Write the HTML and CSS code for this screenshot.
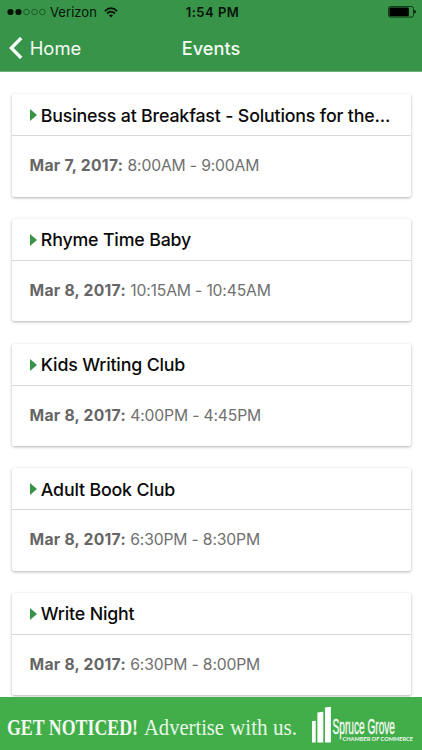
FILE: index.html
```html
<!DOCTYPE html>
<html lang="en">
<head>
  <meta charset="UTF-8">
  <title>Events</title>
  <meta name="viewport" content="width=device-width, initial-scale=1">
  <link rel="stylesheet" href="styles.css">
</head>
<body>

  <div class="app">
    <header class="header">
      <div class="status-bar">
        <div class="carrier">
          <svg class="signal" width="40" height="10" viewBox="0 0 40 10">
            <circle class="on" cx="4.5" cy="5" r="3.1"/>
            <circle class="on" cx="12.5" cy="5" r="3.1"/>
            <circle class="off" cx="20.5" cy="5" r="2.8"/>
            <circle class="off" cx="28.5" cy="5" r="2.8"/>
            <circle class="off" cx="36.3" cy="5" r="2.8"/>
          </svg>
          <span class="carrier-name">Verizon</span>
          <svg class="wifi" width="14" height="11" viewBox="0 0 14 11">
            <path d="M0.8 4.1 Q7 -1.7 13.2 4.1 M3 6.5 Q7 2.9 11 6.5"/>
            <path class="wifi-dot" d="M4.9 8.3 Q7 6.5 9.1 8.3 L7 10.4 Z"/>
          </svg>
        </div>
        <span class="time">1:54 PM</span>
        <svg class="battery" width="28" height="12" viewBox="0 0 28 12">
          <rect class="battery-case" x="0.5" y="0.5" width="25" height="10.6" rx="2"/>
          <rect x="1.4" y="1.4" width="19.4" height="8.8" rx="0.8"/>
          <path d="M26.3 4 Q27.8 4.3 27.8 5.8 Q27.8 7.3 26.3 7.6 Z"/>
        </svg>
      </div>
      <nav class="nav-bar">
        <a class="back">
          <svg width="14" height="22" viewBox="0 0 14 22">
            <path d="M12.2 1 L2.4 11 L12.2 21"/>
          </svg>
          <span>Home</span>
        </a>
        <h1 class="title">Events</h1>
      </nav>
    </header>

    <main class="events">
      <article class="card">
        <h2 class="card-header"><span class="arrow"></span>Business at Breakfast - Solutions for the...</h2>
        <p class="card-body"><b>Mar 7, 2017:</b> 8:00AM - 9:00AM</p>
      </article>
      <article class="card">
        <h2 class="card-header"><span class="arrow"></span>Rhyme Time Baby</h2>
        <p class="card-body"><b>Mar 8, 2017:</b> 10:15AM - 10:45AM</p>
      </article>
      <article class="card">
        <h2 class="card-header"><span class="arrow"></span>Kids Writing Club</h2>
        <p class="card-body"><b>Mar 8, 2017:</b> 4:00PM - 4:45PM</p>
      </article>
      <article class="card">
        <h2 class="card-header"><span class="arrow"></span>Adult Book Club</h2>
        <p class="card-body"><b>Mar 8, 2017:</b> 6:30PM - 8:30PM</p>
      </article>
      <article class="card">
        <h2 class="card-header"><span class="arrow"></span>Write Night</h2>
        <p class="card-body"><b>Mar 8, 2017:</b> 6:30PM - 8:00PM</p>
      </article>
    </main>

    <footer class="banner">
      <svg width="422" height="53" viewBox="0 0 422 53">
        <text class="slogan strong" x="7" y="38.3" textLength="131" lengthAdjust="spacingAndGlyphs">GET NOTICED!</text>
        <text class="slogan" x="144" y="38.3" textLength="80" lengthAdjust="spacingAndGlyphs">Advertise</text>
        <text class="slogan" x="230" y="38.3" textLength="67" lengthAdjust="spacingAndGlyphs">with us.</text>
        <path class="logo-bars" d="M312 24.3 L315.7 23.8 V45.5 H312 Z M317.4 15.5 L323.3 14.8 V45.5 H317.4 Z M325 10.5 L330.9 9.7 V45.5 H325 Z"/>
        <text class="logo-name" x="332.5" y="37.3" textLength="62.5" lengthAdjust="spacingAndGlyphs">Spruce Grove</text>
        <text class="logo-sub" x="342.5" y="43.6" textLength="70.5" lengthAdjust="spacingAndGlyphs">CHAMBER OF COMMERCE</text>
      </svg>
    </footer>
  </div>

</body>
</html>
```

FILE: styles.css
```css
/* General Styles */
* {
  box-sizing: border-box;
}

body {
  margin: 0;
  background-color: #fff;
  font-family: Inter, "Liberation Sans", sans-serif;
}

.app {
  display: flex;
  flex-direction: column;
  height: 750px;
  overflow: hidden;
}

svg {
  display: block;
}

/* Header */
.header {
  flex: none;
  height: 72px;
  background-color: #389448;
  border-bottom: 1px solid #6fb17b;
}

.status-bar {
  display: grid;
  grid-template-columns: 1fr auto 1fr;
  align-items: center;
  height: 24px;
  padding: 0 6px;
  color: #041207;
  font-size: 13px;
}

.carrier {
  display: flex;
  align-items: center;
}

.carrier-name {
  margin: 0 7px 0 4px;
  letter-spacing: 0.05px;
}

.signal .on {
  fill: #041207;
}

.signal .off {
  fill: none;
  stroke: #12441d;
  stroke-width: 0.7;
}

.wifi path {
  fill: none;
  stroke: #041207;
  stroke-width: 1.7;
}

.wifi .wifi-dot {
  fill: #041207;
  stroke: none;
}

.time {
  padding-left: 3px;
  font-weight: 600;
  letter-spacing: 0.5px;
}

.battery {
  justify-self: end;
}

.battery .battery-case {
  fill: none;
  stroke: #0d3116;
  stroke-width: 0.9;
}

.nav-bar {
  display: grid;
  grid-template-columns: 1fr auto 1fr;
  align-items: center;
  height: 47px;
  padding: 0 9px;
  color: #f4faf5;
}

.back {
  display: flex;
  align-items: center;
  gap: 6.7px;
  font-size: 18.4px;
}

.back path {
  fill: none;
  stroke: #f4faf5;
  stroke-width: 3.4;
}

.title {
  margin: 0;
  font-size: 18.2px;
  font-weight: 500;
}

/* Event cards */
.events {
  flex: 1;
  min-height: 0;
  overflow: hidden;
  padding: 22.3px 11.5px 0;
}

.card {
  height: 102.4px;
  margin-bottom: 22.3px;
  border-radius: 2px;
  background-color: #fff;
  box-shadow: 0 1px 3px rgba(0, 0, 0, 0.3);
}

.card-header {
  display: flex;
  align-items: center;
  height: 41.9px;
  margin: 0;
  padding: 0.8px 0 0 18px;
  border-bottom: 1px solid #d8d8d8;
  color: #0a0a0a;
  font-size: 17.8px;
  font-weight: 500;
  letter-spacing: -0.17px;
  white-space: nowrap;
}

.arrow {
  margin-right: 4.3px;
  border-top: 6px solid transparent;
  border-bottom: 6px solid transparent;
  border-left: 7px solid #389448;
}

.card-body {
  margin: 0;
  padding: 18px;
  color: #707070;
  font-size: 15.7px;
  line-height: 24px;
  letter-spacing: -0.16px;
}

.card-body b {
  color: #666;
  letter-spacing: 0.27px;
}

/* Ad banner */
.banner {
  flex: none;
  height: 53px;
  background-color: #42ae4a;
}

.slogan {
  fill: #e8f7e7;
  font-family: "Liberation Serif", serif;
  font-size: 23.5px;
}

.slogan.strong {
  fill: #f2faf1;
  font-weight: bold;
}

.logo-bars {
  fill: #fff;
}

.logo-name {
  fill: #f5fbf5;
  stroke: #f5fbf5;
  stroke-width: 0.4;
  font-family: "Liberation Sans Narrow", "Liberation Sans", sans-serif;
  font-size: 22px;
}

.logo-sub {
  fill: #f5fbf5;
  font-family: Lato, sans-serif;
  font-size: 6.4px;
  font-weight: bold;
}
```
